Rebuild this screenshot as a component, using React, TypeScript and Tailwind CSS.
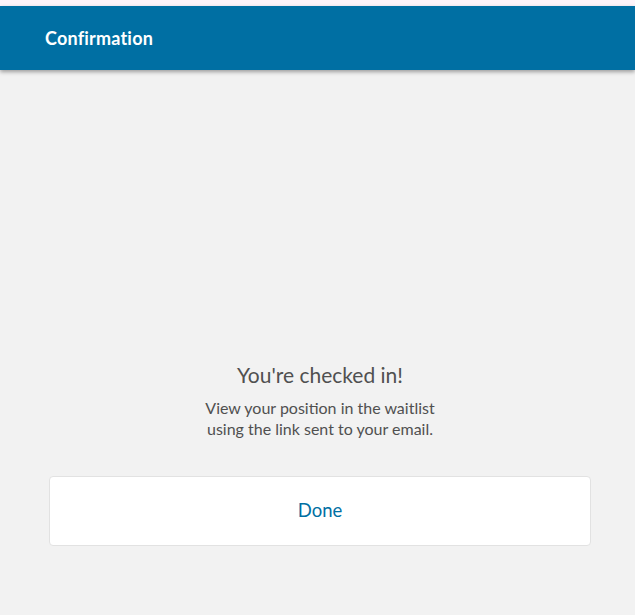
import React from 'react';

const App: React.FC = () => {
  return (
    <div className="min-h-[615px] bg-[#f2f2f2] flex flex-col" style={{ fontFamily: 'Lato, "Noto Sans", sans-serif' }}>
      <div className="h-[6px] bg-[#fdf4fa]" />
      {/* Header */}
      <header className="h-[64px] bg-[#006fa3] flex items-center pl-[45px] shadow-[0_2px_4px_rgba(0,0,0,0.35)] relative">
        <h1 className="text-white text-[18px] font-bold tracking-[0.2px]">Confirmation</h1>
      </header>

      {/* Body */}
      <main className="flex flex-col items-center pt-[292px] ml-[49px] mr-[44px]">
        <h2 className="text-[21px] text-[#505050] leading-[26px]">You're checked in!</h2>
        <p className="mt-[9px] text-[16px] text-[#505050] leading-[21px] text-center">
          View your position in the waitlist
          <br />
          using the link sent to your email.
        </p>
        <button className="mt-[37px] w-full h-[70px] bg-white rounded-[4px] border border-[#e2e2e2] text-[#006fa3] text-[18.5px]">
          Done
        </button>
      </main>
    </div>
  );
};

export default App;
